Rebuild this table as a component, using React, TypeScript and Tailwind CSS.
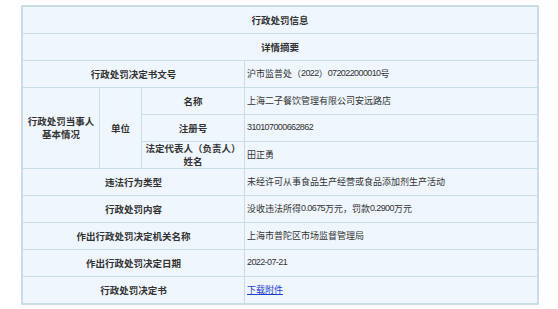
// 行政处罚信息 详情表（缩放 0.75 后的 SimSun 风格）
const cell = "flex items-center bg-[#f0f6fd]";
const label = `${cell} justify-center text-center font-bold text-[9.5px] leading-[12px]`;
const value = `${cell} pl-[2px] text-[9px]`;

function Num({ children }: { children: string }) {
  return <span className="font-['Liberation_Sans',sans-serif] text-[9px] tracking-[-0.6px]">{children}</span>;
}

function Lines({ a, b }: { a: string; b: string }) {
  return (
    <div className="flex flex-col items-center leading-[13px]">
      <span>{a}</span>
      <span>{b}</span>
    </div>
  );
}

export default function App() {
  return (
    <div className="min-h-[309px] w-[558px] bg-white pl-[21px] pt-[5px] font-['Noto_Sans_CJK_SC',sans-serif] text-[#333]">
      <div className="grid w-[518px] grid-cols-[76px_41px_102px_292px] auto-rows-[26px] gap-px border-2 border-[#c9dce8] bg-[#c9dce8]">
        <div className={`${label} col-span-4`}>行政处罚信息</div>
        <div className={`${label} col-span-4`}>详情摘要</div>

        <div className={`${label} col-span-3`}>行政处罚决定书文号</div>
        <div className={value}>
          沪市监普处（<Num>2022</Num>）<Num>072022000010</Num>号
        </div>

        <div className={`${label} row-span-3`}>
          <Lines a="行政处罚当事人" b="基本情况" />
        </div>
        <div className={`${label} row-span-3`}>单位</div>
        <div className={label}>名称</div>
        <div className={value}>上海二子餐饮管理有限公司安远路店</div>
        <div className={label}>注册号</div>
        <div className={value}>
          <Num>310107000662862</Num>
        </div>
        <div className={label}>
          <Lines a="法定代表人（负责人）" b="姓名" />
        </div>
        <div className={value}>田正勇</div>

        <div className={`${label} col-span-3`}>违法行为类型</div>
        <div className={value}>未经许可从事食品生产经营或食品添加剂生产活动</div>

        <div className={`${label} col-span-3`}>行政处罚内容</div>
        <div className={value}>
          没收违法所得<Num>0.0675</Num>万元，罚款<Num>0.2900</Num>万元
        </div>

        <div className={`${label} col-span-3`}>作出行政处罚决定机关名称</div>
        <div className={value}>上海市普陀区市场监督管理局</div>

        <div className={`${label} col-span-3`}>作出行政处罚决定日期</div>
        <div className={value}>
          <Num>2022-07-21</Num>
        </div>

        <div className={`${label} col-span-3`}>行政处罚决定书</div>
        <div className={value}>
          <a href="#" className="text-[#1d3fcc] underline">
            下载附件
          </a>
        </div>
      </div>
    </div>
  );
}
